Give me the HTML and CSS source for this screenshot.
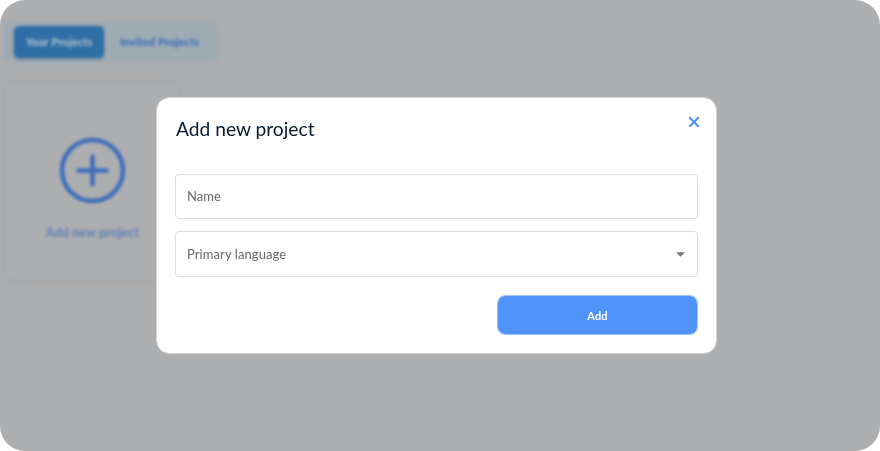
FILE: index.html
```html
<!DOCTYPE html>
<html lang="en">
<head>
<meta charset="utf-8">
<title>Projects</title>
<link rel="stylesheet" href="styles.css">
</head>
<body>
<div class="app">
  <main class="page">
    <nav class="tabs">
      <span class="tab tab-active">Your Projects</span>
      <span class="tab">Invited Projects</span>
    </nav>
    <section class="card">
      <svg class="plus" viewBox="0 0 68 68" fill="none" stroke="currentColor" stroke-width="4.6" stroke-linecap="round"><circle cx="33.5" cy="34.5" r="30.5"/><path d="M33.5 20.5v28M19.5 34.5h28"/></svg>
      <span class="card-label">Add new project</span>
    </section>
  </main>
  <div class="overlay">
    <form class="dialog">
      <header class="head">
        <h1 class="title">Add new project</h1>
        <svg class="close" viewBox="0 0 12 12" fill="none" stroke="currentColor" stroke-width="2"><path d="M1.3 1.3l9.4 9.4M10.7 1.3l-9.4 9.4"/></svg>
      </header>
      <div class="field name">Name</div>
      <div class="field language">
        <span>Primary language</span>
        <svg class="caret" viewBox="0 0 8 4"><path d="M0 0h8L4 4z" fill="currentColor"/></svg>
      </div>
      <button class="add" type="button">Add</button>
    </form>
  </div>
</div>
</body>
</html>
```
FILE: styles.css
```css
* { box-sizing: border-box; }
body { margin: 0; background: #fff; font-family: Lato, sans-serif; }
.app {
  position: relative;
  width: 880px;
  height: 451px;
  overflow: hidden;
  border-radius: 25px;
  background: #adaeb0;
}
.page { padding: 21px 0 0 4px; filter: blur(1.4px); }
.tabs {
  display: flex;
  align-items: center;
  gap: 16px;
  width: 214px;
  height: 42px;
  padding: 0 10px;
  border-radius: 8px;
  background: #9fabb3;
}
.tab { padding-bottom: 2px; font-size: 11px; font-weight: 900; letter-spacing: .1px; color: #416fba; white-space: nowrap; }
.tab-active {
  width: 90px;
  height: 32px;
  padding-bottom: 0;
  line-height: 31px;
  text-align: center;
  border-radius: 5px;
  color: #a5bac9;
  background: #306fa5;
  box-shadow: 0 1px 3px rgba(30, 70, 105, .5);
}
.card {
  display: flex;
  flex-direction: column;
  align-items: center;
  width: 177px;
  height: 201px;
  margin-top: 18px;
  padding-top: 54px;
  border: 1px solid #a2a4a8;
  border-radius: 12px;
  box-shadow: 0 0 10px rgba(160, 165, 155, .3);
  color: #3e6dba;
}
.plus { width: 68px; height: 68px; }
.card-label { margin-top: 18px; line-height: 20px; font-size: 12.8px; font-weight: 700; color: #5a7fb9; }
.overlay { position: absolute; inset: 0; padding: 97px 0 0 156px; }
.dialog {
  display: flex;
  flex-direction: column;
  width: 561px;
  height: 257px;
  padding: 0 19px;
  border: 1px solid #d3d4d5;
  border-radius: 13px;
  background: #fff;
  background-clip: padding-box;
}
.head { display: flex; justify-content: space-between; height: 76px; padding: 17px 0 0; }
.title { margin: 0; font-size: 19.2px; line-height: 28px; font-weight: 400; color: #071a30; }
.close { width: 12px; height: 12px; margin: .5px -3px 0 0; color: #4b8ff8; }
.field {
  display: flex;
  align-items: center;
  justify-content: space-between;
  width: 523px;
  margin-left: -1px;
  padding: 0 12px 0 11px;
  border: 1px solid #dcdcdc;
  border-radius: 4px;
  font-size: 13px;
  letter-spacing: .08px;
  color: #686868;
}
.name { height: 45px; padding-bottom: 2px; letter-spacing: 0; }
.language { height: 46px; margin-top: 12px; }
.caret { width: 9px; height: 5px; color: #757575; }
.add {
  width: 201px;
  height: 40px;
  margin: 18px -1px 0 0;
  padding: 0;
  align-self: flex-end;
  border: 1px solid #9dc3fc;
  border-radius: 8px;
  font: 700 11px Lato, sans-serif;
  letter-spacing: .1px;
  color: #fff;
  background: #4e92fa;
  background-clip: padding-box;
}
```
